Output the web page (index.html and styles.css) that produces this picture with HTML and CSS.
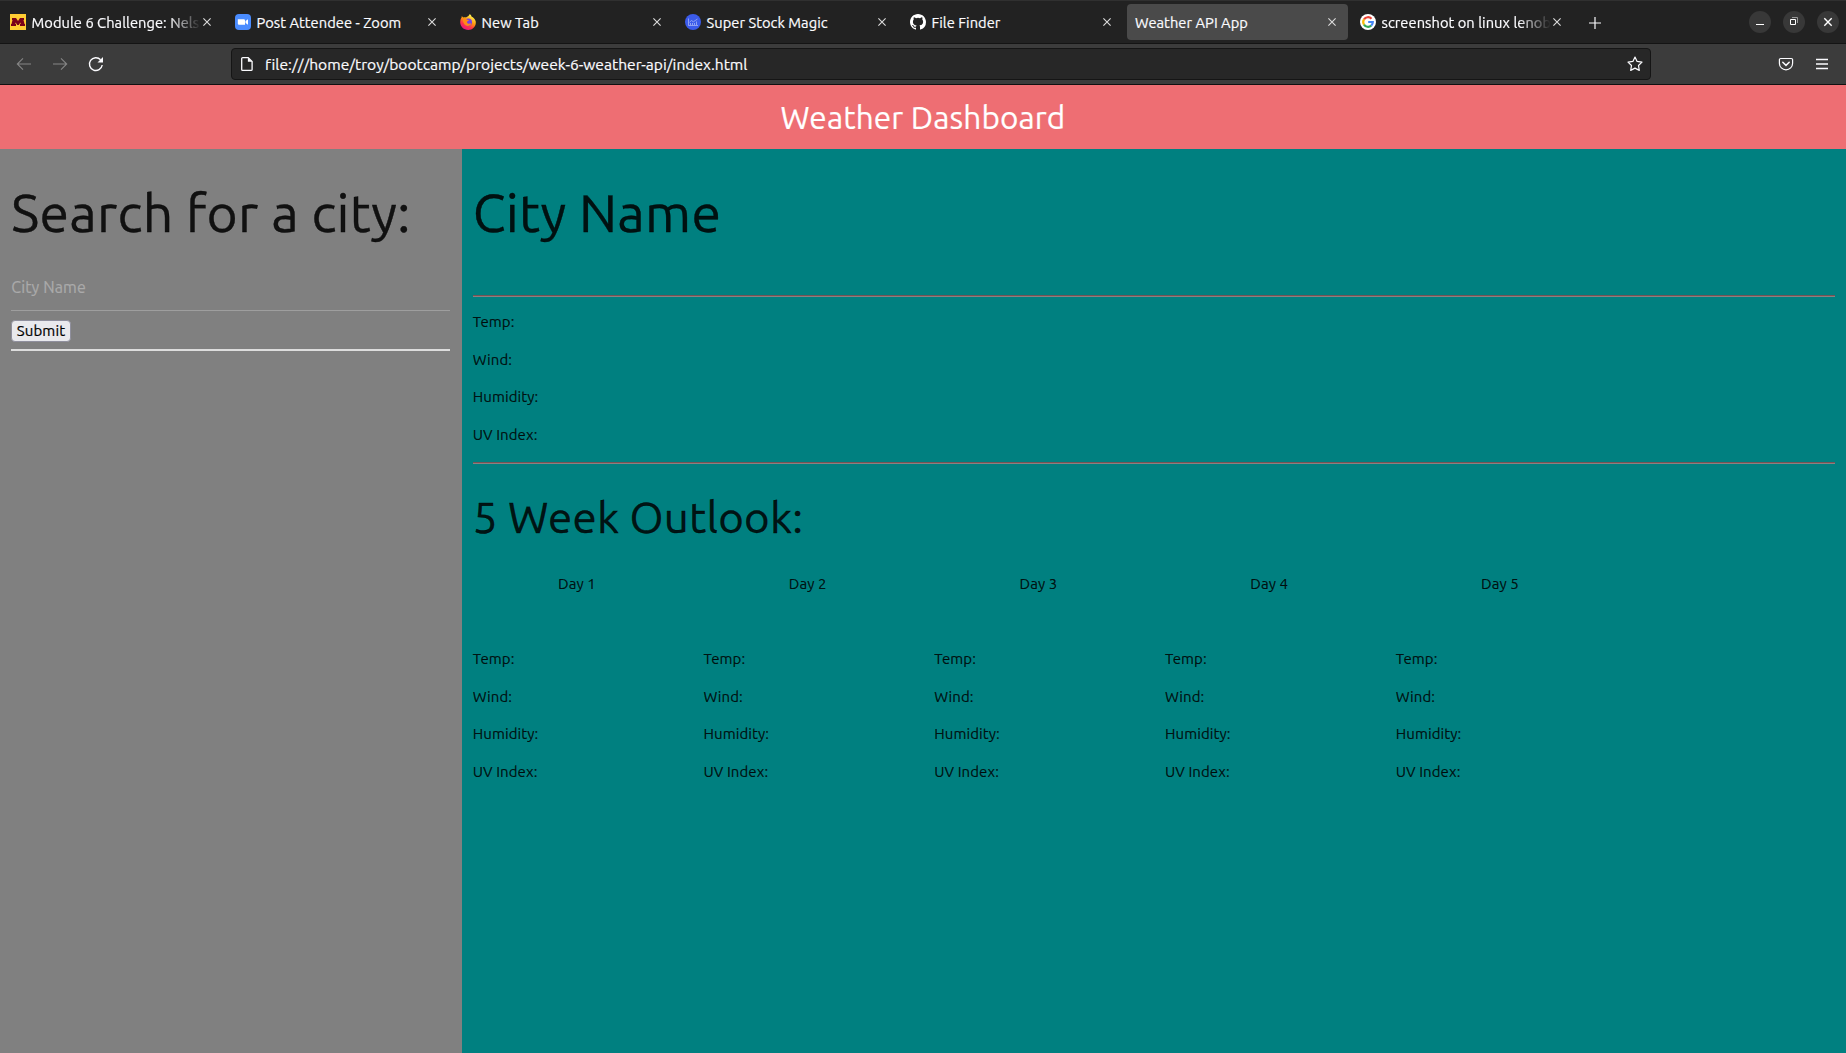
FILE: index.html
```html
<!DOCTYPE html>
<html lang="en">
<head>
<meta charset="utf-8">
<title>Weather API App</title>
<link rel="stylesheet" href="styles.css">
</head>
<body>
<svg width="0" height="0" class="defs">
  <symbol id="x" viewBox="0 0 8 8"><path d="M.4.4l7.2 7.2M7.6.4L.4 7.6" stroke="currentColor" stroke-width="1.1" fill="none"/></symbol>
  <symbol id="google" viewBox="0 0 16 16"><circle cx="8" cy="8" r="8" fill="#fff"/><g fill="none" stroke-width="2.2"><path d="M4 5.4A4.8 4.8 0 0 1 11.5 4.7" stroke="#ea4335"/><path d="M4 10.6A4.8 4.8 0 0 1 4 5.4" stroke="#fbbc05"/><path d="M11.2 11.6A4.8 4.8 0 0 1 4 10.6" stroke="#34a853"/><path d="M8.2 8H12.8A4.8 4.8 0 0 1 11.2 11.6" stroke="#4285f4"/></g></symbol>
</svg>
<div class="tabbar">
  <div class="tab">
    <svg class="favicon" viewBox="0 0 16 16"><path fill="#ffcc33" d="M0 0h16v16H0z"/><path fill="#7a0019" d="M2 4h4l2 3 2-3h4v2h-.5l1 4h.5v2h-5v-2h.7l-.4-1.500L8.800 11H7.200L5.700 8.500 5.300 10H6v2H1v-2h.5l1-4H2z"/></svg>
    <span class="title fade">Module 6 Challenge: Nels</span>
    <svg class="close"><use href="#x"/></svg>
  </div>
  <div class="tab">
    <svg class="favicon" viewBox="0 0 16 16"><rect width="16" height="16" rx="4" fill="#4a8cff"/><path fill="#fff" d="M2.800 5.200h6a1.200 1.200 0 0 1 1.200 1.200v4.400H4a1.200 1.200 0 0 1-1.200-1.200zM10.500 7l2.500-1.700v5.400L10.500 9z"/></svg>
    <span class="title">Post Attendee - Zoom</span>
    <svg class="close"><use href="#x"/></svg>
  </div>
  <div class="tab">
    <svg class="favicon" viewBox="0 0 16 16"><defs><linearGradient id="fx" x1=".8" y1="0" x2=".25" y2="1"><stop offset=".1" stop-color="#fff44f"/><stop offset=".45" stop-color="#ff980e"/><stop offset=".7" stop-color="#ff3647"/><stop offset="1" stop-color="#e31587"/></linearGradient></defs><path fill="url(#fx)" d="M9.800 0c1 .8 1.600 1.700 1.900 2.700 1.400.6 3.200 2 3.900 4.300 1.100 4.500-2.500 8.900-7.400 8.900C3.700 15.900.2 12.500.2 8.200c0-1.900.5-3.500 1.500-4.900V2l1.600 1.500c.8-.3 1.800-.3 2.700 0C7.300 2.500 9 2 9.800 0z"/><circle cx="8.300" cy="8.200" r="3.700" fill="#7542e5"/><path fill="#ff8a16" d="M2.800 4.500c1.700-.7 3.400 0 4.400 1.300l1.600.1c.1.800-1.200 1.100-1.700 1.500-.2.700-.1 1.500.7 2 1.300.8 2.500-.2 3.500.3-1 2-3.300 2.800-5.500 1.700C3.600 10.200 2.700 7.500 2.800 4.500z"/></svg>
    <span class="title">New Tab</span>
    <svg class="close"><use href="#x"/></svg>
  </div>
  <div class="tab">
    <svg class="favicon" viewBox="0 0 16 16"><circle cx="8" cy="8" r="8" fill="#3b5bea"/><g fill="none" stroke="#a3b3f5" stroke-width=".8"><path d="M3.500 4.500v7H13M4.500 8.300l2-1.800 1.800 1.300 2-1.300L12.500 5M5.500 11V9M7.500 11V9M9.500 11V9M11.500 11V7.500"/></g></svg>
    <span class="title">Super Stock Magic</span>
    <svg class="close"><use href="#x"/></svg>
  </div>
  <div class="tab">
    <svg class="favicon" viewBox="0 0 16 16"><path fill="#fff" d="M8 0C3.580 0 0 3.580 0 8c0 3.540 2.290 6.530 5.470 7.590.4.070.55-.17.55-.38 0-.19-.01-.82-.01-1.490-2.010.37-2.530-.49-2.690-.94-.09-.23-.48-.94-.82-1.130-.28-.15-.68-.52-.01-.53.63-.01 1.080.58 1.230.82.72 1.210 1.870.87 2.330.66.07-.52.28-.87.51-1.070-1.780-.2-3.640-.89-3.640-3.950 0-.87.31-1.590.82-2.150-.08-.2-.36-1.020.08-2.120 0 0 .67-.21 2.200.82a7.600 7.600 0 0 1 4 0c1.530-1.040 2.200-.82 2.200-.82.44 1.100.16 1.920.08 2.120.51.56.82 1.270.82 2.150 0 3.070-1.870 3.750-3.650 3.950.29.25.54.73.54 1.480 0 1.070-.01 1.930-.01 2.200 0 .21.15.46.55.38A8 8 0 0 0 16 8c0-4.420-3.580-8-8-8z"/></svg>
    <span class="title">File Finder</span>
    <svg class="close"><use href="#x"/></svg>
  </div>
  <div class="tab active">
    <span class="title">Weather API App</span>
    <svg class="close"><use href="#x"/></svg>
  </div>
  <div class="tab">
    <svg class="favicon"><use href="#google"/></svg>
    <span class="title fade">screenshot on linux lenob</span>
    <svg class="close"><use href="#x"/></svg>
  </div>
  <svg class="new-tab" viewBox="0 0 12 12"><path d="M6 0v12M0 6h12" stroke="#fbfbfe" stroke-width="1.200"/></svg>
  <div class="window-controls">
    <span><svg viewBox="0 0 22 22"><path d="M7 13.500h8" stroke="#fff"/></svg></span>
    <span><svg viewBox="0 0 22 22" fill="none"><path d="M7.500 8.500h5v5h-5z" stroke="#fff"/><path d="M9 6.500h5.500V12" stroke="#999"/></svg></span>
    <span><svg viewBox="0 0 22 22"><path d="M7.300 7.300l7.400 7.400M14.700 7.300l-7.400 7.400" stroke="#fff" stroke-width="1.400"/></svg></span>
  </div>
</div>
<div class="toolbar">
  <div class="nav-buttons">
    <svg viewBox="0 0 16 16" class="dim"><path d="M15 8H1.500M7 2.300L1.300 8 7 13.700"/></svg>
    <svg viewBox="0 0 16 16" class="dim"><path d="M1 8h13.500M9 2.300L14.700 8 9 13.700"/></svg>
    <svg viewBox="0 0 16 16"><path d="M14.200 9A6.400 6.400 0 1 1 12.600 3.800" stroke-width="1.400"/><path d="M15 1v5.500H9.500z" fill="#fbfbfe" stroke="none"/></svg>
  </div>
  <div class="urlbar">
    <svg viewBox="0 0 16 16"><path d="M2.700 1.600h5.500L12.100 5.500v7.900a1 1 0 0 1-1 1H2.700a1 1 0 0 1-1-1V2.600a1 1 0 0 1 1-1z" stroke-width="1.300"/><path d="M7.900 1.500v4.300h4.300z" fill="#fbfbfe" stroke="none"/></svg>
    <span class="url">file:///home/troy/bootcamp/projects/week-6-weather-api/index.html</span>
    <svg class="star" viewBox="0 0 16 16"><path d="M8 1l2.100 4.400 4.900.7-3.500 3.400.8 4.900L8 12.100l-4.300 2.300.8-4.900L1 6.100l4.900-.7z" stroke-width="1.200" stroke-linejoin="round"/></svg>
  </div>
  <div class="tools">
    <svg viewBox="0 0 16 16"><path d="M2.700 2.500h10.600a1.300 1.300 0 0 1 1.300 1.300v3.400a6.600 6.600 0 0 1-13.200 0V3.800a1.300 1.300 0 0 1 1.300-1.300z" stroke-width="1.200"/><path d="M4.800 6.300L8 9.400l3.200-3.100" stroke-width="1.500" stroke-linecap="round"/></svg>
    <svg viewBox="0 0 16 16"><path d="M2 3.500h12M2 8h12M2 12.500h12" stroke-width="1.300"/></svg>
  </div>
</div>
<header>Weather Dashboard</header>
<div class="row">
  <aside>
    <h2>Search for a city:</h2>
    <input type="text" placeholder="City Name">
    <button>Submit</button>
  </aside>
  <main>
    <h2>City Name</h2>
    <section class="today">
      <p>Temp:</p><p>Wind:</p><p>Humidity:</p><p>UV Index:</p>
    </section>
    <h3>5 Week Outlook:</h3>
    <section class="outlook">
      <div><p class="day">Day 1</p><p>Temp:</p><p>Wind:</p><p>Humidity:</p><p>UV Index:</p></div>
      <div><p class="day">Day 2</p><p>Temp:</p><p>Wind:</p><p>Humidity:</p><p>UV Index:</p></div>
      <div><p class="day">Day 3</p><p>Temp:</p><p>Wind:</p><p>Humidity:</p><p>UV Index:</p></div>
      <div><p class="day">Day 4</p><p>Temp:</p><p>Wind:</p><p>Humidity:</p><p>UV Index:</p></div>
      <div><p class="day">Day 5</p><p>Temp:</p><p>Wind:</p><p>Humidity:</p><p>UV Index:</p></div>
    </section>
  </main>
</div>
</body>
</html>
```

FILE: styles.css
```css
* { box-sizing: border-box; }
body {
  margin: 0; height: 1053px; overflow: hidden;
  display: flex; flex-direction: column;
  font: 15px/22.5px Ubuntu, "Noto Sans", sans-serif;
  color: rgba(0, 0, 0, .87);
  -webkit-text-stroke: .2px;
}
svg { display: block; flex: none; }
.defs { display: none; }

/* browser tabs */
.tabbar {
  height: 44px; flex: none; display: flex; align-items: flex-start;
  padding: 3px 7px 0 2px; background: #222;
  border-top: 1px solid #303030; border-bottom: 1px solid #141414;
  color: #fbfbfe; font-size: 14.67px; letter-spacing: .05px;
}
.tab {
  width: 221px; height: 36px; margin-right: 4px; padding: 0 12px 0 8px;
  flex: none; display: flex; align-items: center; border-radius: 4px;
}
.tab.active { background: #4a4a4a; }
.favicon { width: 16px; height: 16px; margin-right: 5.5px; }
.close { width: 8px; height: 8px; color: #ddd; }
.title { flex: 1; min-width: 0; padding-top: 2px; white-space: nowrap; }
.fade { -webkit-mask-image: linear-gradient(to left, transparent 0, #000 32px); mask-image: linear-gradient(to left, transparent 0, #000 32px); margin-right: 2px; }
.new-tab { width: 12px; height: 12px; margin: 12.5px 0 0 11.5px; }
.window-controls { display: flex; gap: 12px; margin: 7px 0 0 auto; }
.window-controls span { width: 22px; height: 22px; border-radius: 50%; background: #383838; }
.window-controls svg { width: 22px; height: 22px; }

/* address bar */
.toolbar {
  height: 41px; flex: none; display: flex; align-items: center;
  padding: 0 16px; background: #3c3c3c; border-bottom: 1px solid #111;
}
.toolbar svg { width: 16px; height: 16px; fill: none; stroke: #fbfbfe; stroke-width: 1.1; }
.nav-buttons { width: 215px; display: flex; gap: 20px; }
.nav-buttons svg.dim { stroke: #858585; }
.urlbar {
  width: 1420px; height: 32px; padding: 0 7px 0 8px; display: flex; align-items: center;
  background: #272727; border: 1px solid #151515; border-radius: 4px; color: #fbfbfe;
}
.url { flex: 1; margin-left: 9px; padding-top: 1px; font-size: 15.6px; letter-spacing: .01px; }
.tools { display: flex; gap: 20px; margin-left: auto; }

/* page */
header {
  height: 64px; flex: none; text-align: center; color: #fff; background: #ee6e73;
  font-size: 31.5px; line-height: 65px; letter-spacing: .13px;
}
.row { flex: 1; display: grid; grid-template-columns: 25% 75%; }
aside {
  display: flex; flex-direction: column; align-items: flex-start;
  background: gray; padding: 33.6px 11.25px 0;
}
main { background: teal; padding: 33.6px 11.25px 0; }
h2, h3, p { margin: 0; font-weight: 400; }
h2, h3 { -webkit-text-stroke: .4px; }
h2 { font-size: 53.4px; line-height: 58.7px; letter-spacing: .3px; }
input {
  display: block; width: 100%; height: 46.7px; margin-top: 23px; padding: 0;
  border: 0; border-bottom: 1px solid #9e9e9e; background: none;
  font: 16px Ubuntu, "Noto Sans", sans-serif; letter-spacing: .1px;
}
input::placeholder { color: #aaa; opacity: 1; }
button {
  width: 59.5px; height: 22px; margin-top: 8.6px; padding: 0;
  border: 1px solid #8f8f9d; border-radius: 4px; background: #e9e9ed; color: #000;
  font: 15px/19px Ubuntu, "Noto Sans", sans-serif; letter-spacing: .15px;
}
aside::after { content: ""; width: 100%; height: 2px; margin-top: 7.4px; background: #ddd; }
.today {
  margin-top: 53.7px; padding: 15.4px 0 15.6px; display: grid; gap: 15px;
  border: solid #765254; border-width: 1px 0;
  box-shadow: inset 0 1px #8b8080, 0 1px #8b8080;
}
p { letter-spacing: .08px; }
h3 { margin: 29.9px 0 32px; font-size: 43.8px; line-height: 48.2px; letter-spacing: .24px; }
.outlook { margin: 0 -11.25px; display: grid; grid-template-columns: repeat(6, 1fr); }
.outlook div { padding: 0 11.25px; display: grid; gap: 15px; }
.day { text-align: center; margin-bottom: 37.5px; }
```
